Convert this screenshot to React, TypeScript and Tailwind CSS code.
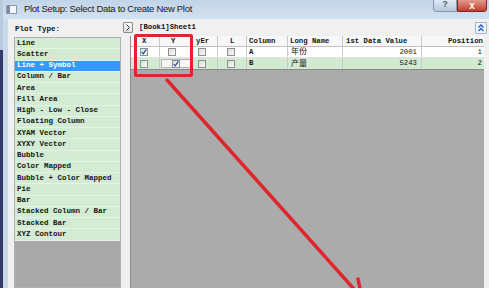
import React from 'react';

const plotTypes = [
  'Line',
  'Scatter',
  'Line + Symbol',
  'Column / Bar',
  'Area',
  'Fill Area',
  'High - Low - Close',
  'Floating Column',
  'XYAM Vector',
  'XYXY Vector',
  'Bubble',
  'Color Mapped',
  'Bubble + Color Mapped',
  'Pie',
  'Bar',
  'Stacked Column / Bar',
  'Stacked Bar',
  'XYZ Contour',
];

const mono = { fontFamily: '"Liberation Mono", "Noto Sans CJK SC", monospace' };

function Check({ on }: { on?: boolean }) {
  return (
    <div className="w-[8px] h-[8px] border border-[#8e8f8f] bg-gradient-to-br from-[#dcdcdc] to-[#fbfbfb] flex items-center justify-center">
      {on && (
        <svg width="8" height="8" viewBox="0 0 8 8">
          <path d="M1 4 L3 6.5 L7 0.5" fill="none" stroke="#21348f" strokeWidth="1.4" />
        </svg>
      )}
    </div>
  );
}

// widths of grid columns, left to right
const cols = [7, 23, 33, 25, 29, 41, 55, 79, 62];

function Cell({ w, children, className = '' }: { w: number; children?: React.ReactNode; className?: string }) {
  return (
    <div className={`h-full shrink-0 border-r border-[#c9c9c9] flex items-center ${className}`} style={{ width: w }}>
      {children}
    </div>
  );
}

export default function App() {
  return (
    <div className="w-[489px] h-[288px] relative overflow-hidden flex bg-[#c8d7e9]" style={mono}>
      {/* window edge over the desktop */}
      <div className="w-[3px] h-full flex flex-col">
        <div className="h-[50px] bg-[#b9cadf]" />
        <div className="flex-1 bg-[#343b6a]" />
      </div>

      <div className="flex-1 flex flex-col">
        {/* title bar */}
        <div className="h-[19px] flex items-center bg-gradient-to-b from-[#c2d4e8] to-[#d3e1ef] relative">
          <div className="ml-[3px] w-[11px] h-[9px] border border-[#8a9bb0] bg-[#f4f7fb] flex items-start">
            <div className="w-[3px] h-full bg-[#7c8ea4]" />
          </div>
          <span className="ml-[7px] text-[9.5px] text-[#1b1b1b] tracking-[-0.3px]" style={{ fontFamily: '"Liberation Sans", sans-serif' }}>
            Plot Setup: Select Data to Create New Plot
          </span>
          <div className="absolute right-[2px] -top-[2px] flex">
            <div className="w-[24px] h-[14px] rounded-bl-[3px] border border-[#8797ab] bg-gradient-to-b from-[#e5edf6] to-[#b6c7db] flex items-center justify-center text-[9px] text-[#4d5f78] font-bold" style={{ fontFamily: '"Liberation Sans", sans-serif' }}>
              ?
            </div>
            <div className="w-[30px] h-[14px] rounded-br-[3px] border border-[#7d2a22] bg-gradient-to-b from-[#e5a195] to-[#c0392b] flex items-center justify-center text-[10px] text-white font-bold" style={{ fontFamily: '"Liberation Sans", sans-serif' }}>
              x
            </div>
          </div>
        </div>

        {/* dialog body */}
        <div className="flex-1 flex ml-[5px] bg-[#f0f0f0]">
          {/* left: plot type list */}
          <div className="w-[114px] flex flex-col pl-[6px] pt-[4px]">
            <div className="h-[13px] text-[7.5px] font-bold text-[#111] pl-[1px] flex items-center">Plot Type:</div>
            <div className="mt-[1px] flex-1 w-[107px] border border-[#b0b0b0] bg-[#a9a9a9] flex flex-col">
              {plotTypes.map((t, i) => (
                <div
                  key={t}
                  className={`h-[11.25px] shrink-0 flex items-center pl-[2px] text-[7.5px] font-bold border-b border-[#e7f3e6] ${
                    i === 2 ? 'bg-[#3399ff] text-white' : 'bg-[#d3ebd2] text-[#151515]'
                  }`}
                >
                  {t}
                </div>
              ))}
            </div>
          </div>

          {/* right: sheet columns */}
          <div className="flex-1 flex flex-col">
            <div className="h-[17px] flex items-center">
              <div className="ml-[1px] w-[10px] h-[11px] border border-[#8c8c8c] bg-gradient-to-b from-white to-[#dedede] rounded-[1px] flex items-center justify-center">
                <svg width="6" height="7" viewBox="0 0 6 7">
                  <path d="M1.5 0.5 L4.5 3.5 L1.5 6.5" fill="none" stroke="#333" strokeWidth="1" />
                </svg>
              </div>
              <span className="ml-[6px] text-[7.3px] font-bold text-[#111]">[Book1]Sheet1</span>
              <div className="ml-auto mr-[2px] w-[12px] h-[12px] border border-[#a8b5c6] bg-[#eef3f9] rounded-[1px] flex items-center justify-center">
                <svg width="8" height="8" viewBox="0 0 8 8">
                  <path d="M1.5 3.5 L4 1 L6.5 3.5 M1.5 7 L4 4.5 L6.5 7" fill="none" stroke="#2a57c4" strokeWidth="1.3" />
                </svg>
              </div>
            </div>

            <div className="flex-1 ml-[8px] mr-[5px] bg-[#ababab] border-l border-[#8e8e8e] flex flex-col text-[7.3px] font-bold text-[#151515]">
              {/* header */}
              <div className="h-[11px] flex bg-[#f7f7f7] border-b border-[#c0c0c0]">
                <Cell w={cols[0] - 1} />
                <Cell w={cols[1]} className="pl-[5px]">X</Cell>
                <Cell w={cols[2]} className="pl-[11px]">Y</Cell>
                <Cell w={cols[3]} className="pl-[3px]">yEr</Cell>
                <Cell w={cols[4]} className="pl-[12px]">L</Cell>
                <Cell w={cols[5]} className="pl-[2px]">Column</Cell>
                <Cell w={cols[6]} className="pl-[2px]">Long Name</Cell>
                <Cell w={cols[7]} className="pl-[3px]">1st Data Value</Cell>
                <Cell w={cols[8]} className="justify-end pr-[1px] border-r-0">Position</Cell>
              </div>
              {/* row A */}
              <div className="h-[11px] flex bg-white border-b border-[#e2e2e2]">
                <Cell w={cols[0] - 1} />
                <Cell w={cols[1]} className="pl-[3px]"><Check on /></Cell>
                <Cell w={cols[2]} className="pl-[8px]"><Check /></Cell>
                <Cell w={cols[3]} className="pl-[5px]"><Check /></Cell>
                <Cell w={cols[4]} className="pl-[9px]"><Check /></Cell>
                <Cell w={cols[5]} className="pl-[2px]">A</Cell>
                <Cell w={cols[6]} className="pl-[3px] font-normal text-[8px]">年份</Cell>
                <Cell w={cols[7]} className="justify-end pr-[4px] font-normal">2001</Cell>
                <Cell w={cols[8]} className="justify-end pr-[2px] border-r-0 font-normal">1</Cell>
              </div>
              {/* row B */}
              <div className="h-[12px] flex bg-[#d2ead1] border-b border-[#8a8a8a]">
                <Cell w={cols[0] - 1} />
                <Cell w={cols[1]} className="pl-[3px]"><Check /></Cell>
                <Cell w={cols[2]} className="px-[1px]">
                  <div className="w-full h-[9px] border border-[#b5b5b5] bg-[#f5f5f5] flex items-center justify-center">
                    <Check on />
                  </div>
                </Cell>
                <Cell w={cols[3]} className="pl-[5px]"><Check /></Cell>
                <Cell w={cols[4]} className="pl-[9px]"><Check /></Cell>
                <Cell w={cols[5]} className="pl-[2px]">B</Cell>
                <Cell w={cols[6]} className="pl-[3px] font-normal text-[8px]">产量</Cell>
                <Cell w={cols[7]} className="justify-end pr-[4px] font-normal">5243</Cell>
                <Cell w={cols[8]} className="justify-end pr-[2px] border-r-0 font-normal">2</Cell>
              </div>
            </div>
          </div>
        </div>
      </div>

      {/* annotation: red box and arrow */}
      <div className="absolute left-[134px] top-[34px] w-[59px] h-[43px] border-[3px] border-[#e0262d] rounded-[2px]" />
      <svg className="absolute inset-0 pointer-events-none" width="489" height="288">
        <g stroke="#e0262d" strokeWidth="3.5" strokeLinecap="round" fill="none">
          <line x1="167" y1="80" x2="362" y2="298" />
          <path d="M358 279 L362 298 L342 293" />
        </g>
      </svg>
    </div>
  );
}
